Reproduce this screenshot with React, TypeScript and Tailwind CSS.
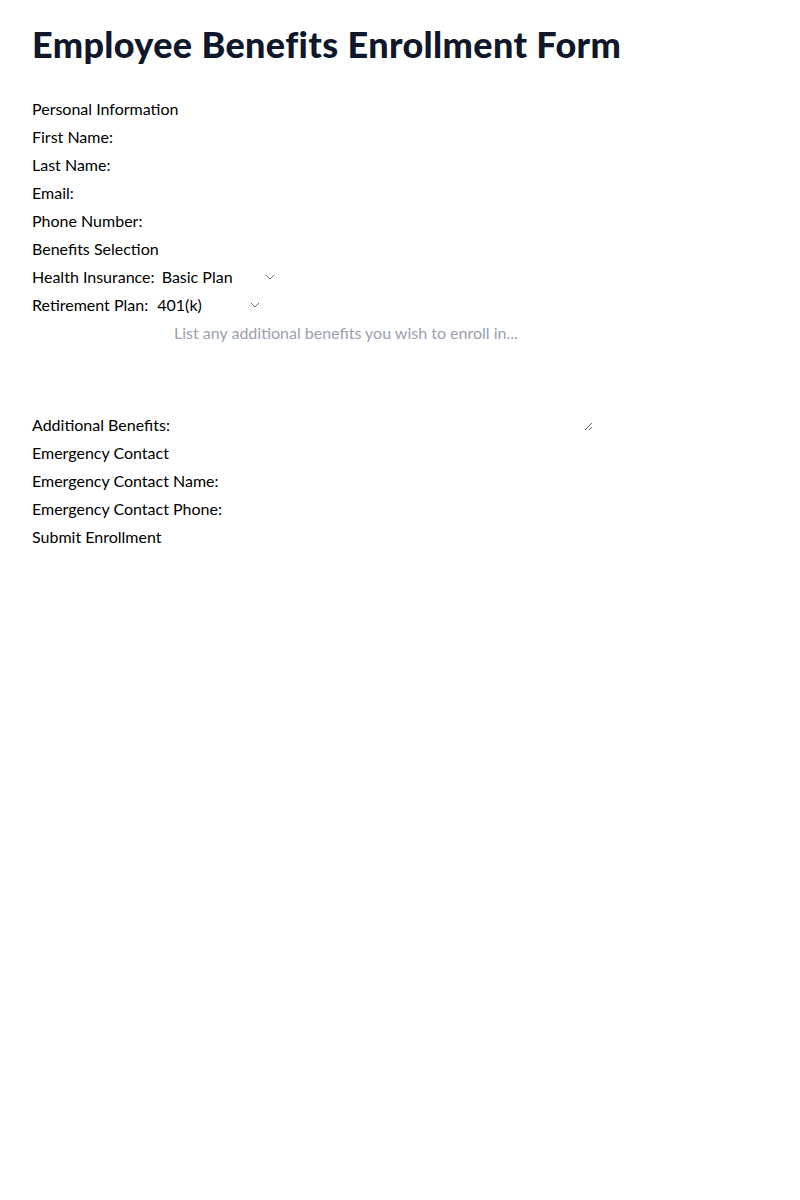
import React from 'react'

const Row = ({ children }: { children: React.ReactNode }) => <div className="mb-1">{children}</div>

const Chevron = () => (
  <svg
    className="pointer-events-none absolute right-[2px] top-1/2 -translate-y-1/2"
    width="10"
    height="6"
    viewBox="0 0 10 6"
    fill="none"
  >
    <path d="M1 1l4 4 4-4" stroke="#6b6b6b" strokeWidth="1" />
  </svg>
)

export default function App() {
  return (
    <div className="min-h-[1200px] bg-white px-8 pt-6 font-['Lato',sans-serif] text-base leading-6 text-black">
      <h1 className="mb-[33px] text-4xl font-black tracking-[0.01em] text-slate-900">
        Employee Benefits Enrollment Form
      </h1>

      <form onSubmit={(e) => e.preventDefault()}>
        <fieldset>
          <Row>
            <legend>Personal Information</legend>
          </Row>
          <Row>
            <label htmlFor="firstName">First Name:</label> <input id="firstName" type="text" />
          </Row>
          <Row>
            <label htmlFor="lastName">Last Name:</label> <input id="lastName" type="text" />
          </Row>
          <Row>
            <label htmlFor="email">Email:</label> <input id="email" type="email" />
          </Row>
          <Row>
            <label htmlFor="phone">Phone Number:</label> <input id="phone" type="tel" />
          </Row>
        </fieldset>

        <fieldset>
          <Row>
            <legend>Benefits Selection</legend>
          </Row>
          <Row>
            <label htmlFor="health">Health Insurance:</label>{' '}
            <span className="relative inline-block">
              <select id="health" defaultValue="basic" className="w-[118px] appearance-none pl-[3px]">
                <option value="basic">Basic Plan</option>
                <option value="premium">Premium Plan</option>
                <option value="none">None</option>
              </select>
              <Chevron />
            </span>
          </Row>
          <Row>
            <label htmlFor="retirement">Retirement Plan:</label>{' '}
            <span className="relative inline-block">
              <select id="retirement" defaultValue="401k" className="w-[110px] appearance-none pl-[5px]">
                <option value="401k">401(k)</option>
                <option value="pension">Pension Plan</option>
                <option value="none">None</option>
              </select>
              <Chevron />
            </span>
          </Row>
          <Row>
            <label htmlFor="additional">Additional Benefits:</label>{' '}
            <textarea
              id="additional"
              rows={4}
              className="h-[110px] w-[419px] placeholder:text-gray-400"
              placeholder="List any additional benefits you wish to enroll in..."
            />
          </Row>
        </fieldset>

        <fieldset>
          <Row>
            <legend>Emergency Contact</legend>
          </Row>
          <Row>
            <label htmlFor="ecName">Emergency Contact Name:</label> <input id="ecName" type="text" />
          </Row>
          <Row>
            <label htmlFor="ecPhone">Emergency Contact Phone:</label> <input id="ecPhone" type="tel" />
          </Row>
        </fieldset>

        <button type="submit">Submit Enrollment</button>
      </form>
    </div>
  )
}
